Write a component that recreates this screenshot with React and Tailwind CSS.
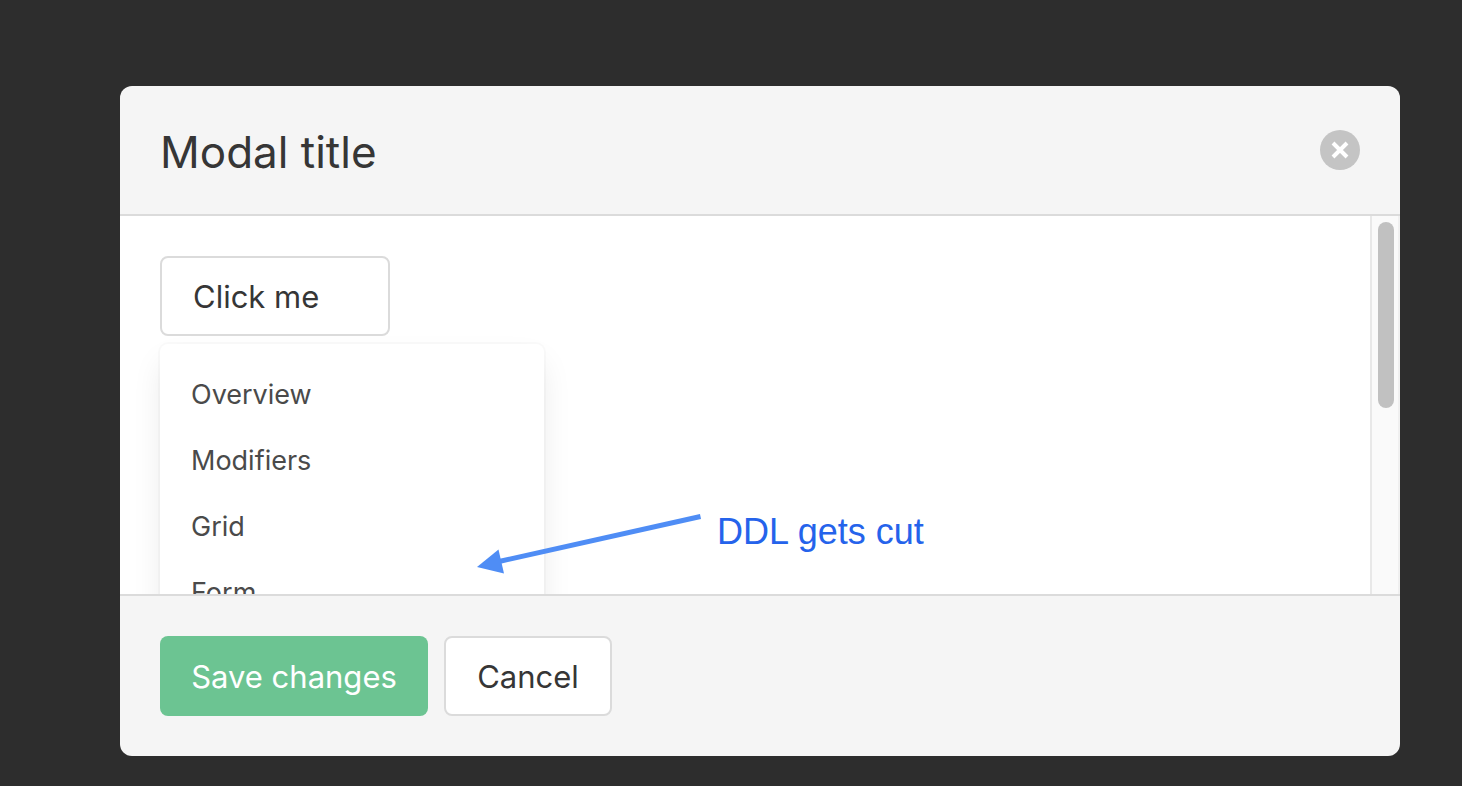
import React, { useState } from 'react';

const menuItems = ['Overview', 'Modifiers', 'Grid', 'Form'];

function Dropdown() {
  const [open, setOpen] = useState(true);

  return (
    <div className="relative inline-block">
      <button
        type="button"
        aria-expanded={open}
        onClick={() => setOpen(!open)}
        className="block h-20 w-[230px] rounded-lg border-2 border-[#dbdbdb] bg-white pl-[31px] pt-0.5 text-left text-[31px] text-[#363636]"
      >
        Click me
      </button>
      {open && (
        <div className="absolute left-0 top-full w-96 pt-2">
          <ul className="rounded-lg bg-white pb-4 pt-[18px] shadow-[0_16px_32px_-4px_rgba(10,10,10,0.1),0_0_0_2px_rgba(10,10,10,0.02)]">
            {menuItems.map((item) => (
              <li key={item}>
                <a href="#" className="block px-[31px] py-3 text-[27px] leading-[42px] text-[#4a4a4a]">{item}</a>
              </li>
            ))}
          </ul>
        </div>
      )}
    </div>
  );
}

function Note() {
  return (
    <div className="absolute left-[357px] top-[296px] flex items-start gap-[15px]">
      <svg width="225" height="64" viewBox="0 0 225 64" fill="none" aria-hidden="true">
        <path d="M223.500 4.500 L22 49.500" stroke="#4f8df5" strokeWidth="5" />
        <path d="M0 55 L21.500 37.500 L27 61.500 Z" fill="#4f8df5" />
      </svg>
      <p className="text-[36px] leading-10 text-[#2563eb]" style={{ fontFamily: '"Liberation Sans", sans-serif' }}>DDL gets cut</p>
    </div>
  );
}

export default function App() {
  return (
    <div className="flex h-screen bg-[#2d2d2d] pb-[30px] pl-[120px] pr-[62px] pt-[86px] font-['Inter',sans-serif]">
      <div role="dialog" aria-labelledby="modal-title" className="flex flex-1 flex-col overflow-hidden rounded-xl">
        <header className="flex items-center justify-between border-b-2 border-[#dbdbdb] bg-[#f5f5f5] px-10 py-[38px]">
          <h1 id="modal-title" className="pt-1 text-[44px] leading-[48px] text-[#363636]">Modal title</h1>
          <button type="button" aria-label="close" className="flex size-10 items-center justify-center rounded-full bg-[#c4c4c4]">
            <svg width="18" height="18" viewBox="0 0 18 18" stroke="#fff" strokeWidth="4" aria-hidden="true">
              <path d="M2 2 L16 16 M16 2 L2 16" />
            </svg>
          </button>
        </header>

        <section className="flex min-h-0 flex-1 bg-white">
          <div className="relative min-w-0 flex-1 overflow-hidden p-10">
            <Dropdown />
            <Note />
          </div>
          {/* scrollbar track */}
          <div className="w-[30px] border-l-2 border-r-2 border-l-[#e8e8e8] border-r-[#f0f0f0] bg-[#fafafa] px-[5px] pt-1.5">
            <div className="ml-px h-[186px] w-4 rounded-full bg-[#c1c1c1]" />
          </div>
        </section>

        <footer className="flex gap-4 border-t-2 border-[#dbdbdb] bg-[#f5f5f5] p-10">
          <button type="button" className="h-20 w-[268px] rounded-lg bg-[#6cc492] pt-0.5 text-[31px] text-white">Save changes</button>
          <button type="button" className="h-20 w-[168px] rounded-lg border-2 border-[#dbdbdb] bg-white pt-0.5 text-[31px] text-[#363636]">Cancel</button>
        </footer>
      </div>
    </div>
  );
}
